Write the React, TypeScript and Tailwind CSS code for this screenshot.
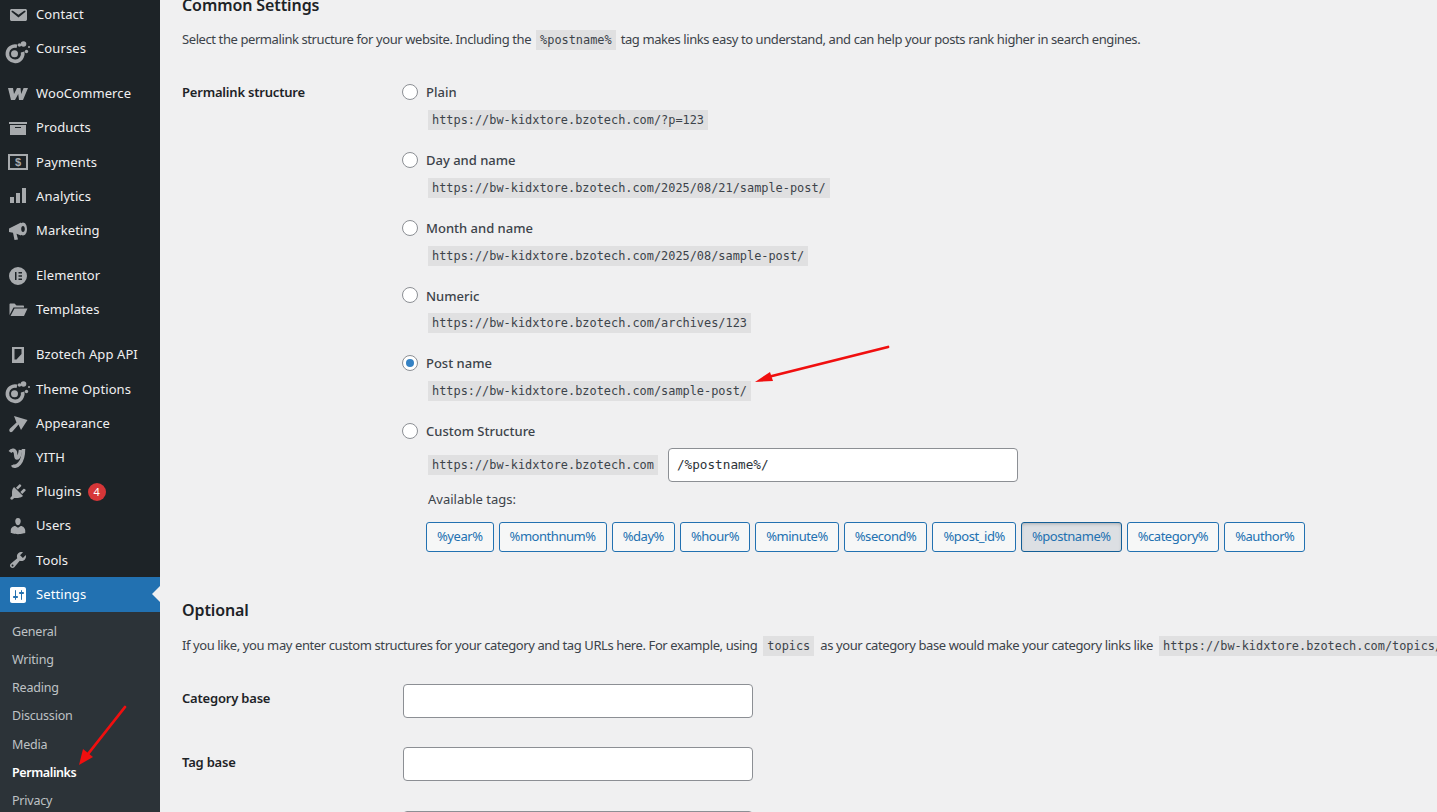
import type { ReactNode } from "react";

const Glyph = ({ children, size = 20 }: { children: ReactNode; size?: number }) => (
    <svg width={size} height={size} viewBox="0 0 20 20" fill="currentColor">
        {children}
    </svg>
);

const icons: Record<string, ReactNode> = {
    mail: (
        <Glyph>
            <path d="M3.87 4h13.25C18.37 4 19 4.59 19 5.79v8.42c0 1.19-.63 1.79-1.88 1.79H3.87c-1.25 0-1.88-.6-1.88-1.79V5.79c0-1.2.63-1.79 1.88-1.79zm6.62 8.6l6.74-5.53c.24-.2.43-.66.13-1.07-.29-.41-.82-.42-1.17-.17l-5.7 3.86L4.8 5.83c-.35-.25-.88-.24-1.17.17-.3.41-.11.87.13 1.07z" />
        </Glyph>
    ),
    ring: (
        <svg width="26" height="26" viewBox="0 0 26 26" fill="currentColor" className="overflow-visible">
            <path d="M12 10.2A7.7 7.7 0 1 0 17.6 16" fill="none" stroke="currentColor" strokeWidth="3.6" />
            <circle cx="9.5" cy="17.7" r="3.5" />
            <circle cx="18.5" cy="8" r="2.8" />
            <circle cx="14.5" cy="9" r="1.8" />
            <circle cx="21.5" cy="15.5" r="1.7" />
            <circle cx="24" cy="11" r="1" />
        </svg>
    ),
    woo: (
        <svg width="20" height="12" viewBox="0 0 20 12" fill="currentColor">
            <path d="M0 0h5l1 6 3-6h3.5l.7 6 2.4-6H20l-5 12h-4l-.8-6-3.2 6H3z" />
        </svg>
    ),
    archive: (
        <Glyph>
            <path d="M19 4v2H1V4h18zM2 7h16v10H2V7zm11 3V9H7v1h6z" />
        </Glyph>
    ),
    money: (
        <svg width="20" height="16" viewBox="0 0 20 16" fill="none">
            <rect x="1" y="1" width="18" height="14" stroke="currentColor" strokeWidth="2" />
            <text x="10" y="12.2" textAnchor="middle" fontSize="11" fontWeight="700" fontFamily="Liberation Sans, sans-serif" fill="currentColor">
                $
            </text>
        </svg>
    ),
    bars: (
        <Glyph>
            <path d="M2 11h4v6H2zM8 7h4v10H8zM14 2h4v15h-4z" />
        </Glyph>
    ),
    megaphone: (
        <Glyph>
            <path d="M1 7.5L13 1.5v13l-4.500-1.700L10 18.500l-3.500.5L5 11.800 1 11z" />
            <path fillRule="evenodd" d="M15 1.500c2.300 0 4 2.900 4 6.500s-1.700 6.500-4 6.500-4-2.900-4-6.500 1.700-6.500 4-6.500zm0 3.500c-1 0-1.800 1.300-1.800 3s.8 3 1.800 3 1.800-1.300 1.800-3-.8-3-1.800-3z" />
        </Glyph>
    ),
    elementor: (
        <svg width="18" height="18" viewBox="0 0 18 18" fill="currentColor">
            <path fillRule="evenodd" d="M9 0a9 9 0 1 1 0 18A9 9 0 0 1 9 0zM6 5v8h1.500V5zm3.500 0v1.500H13V5zm0 3.250v1.500H13v-1.500zm0 3.250V13H13v-1.500z" />
        </svg>
    ),
    folder: (
        <Glyph>
            <path d="M16 7.500H5.500L1.500 15V4.500c0-.6.400-1 1-1h4l2 2h6.500c.6 0 1 .4 1 1zM6.500 8.500H19.500L16 16H2.500z" />
        </Glyph>
    ),
    phone: (
        <svg width="12" height="16" viewBox="0 0 12 16" fill="currentColor">
            <path fillRule="evenodd" d="M0 0h12v16H0zM2.500 2v10.500h2L9.500 7V2z" />
        </svg>
    ),
    brush: (
        <Glyph>
            <path d="M6 2L19.500 6 13 16 10.500 10.500 4.500 17.500Q2.800 18.800 1.600 17.400 .6 16 2 14.500L8.500 8.500z" />
        </Glyph>
    ),
    yith: (
        <svg width="18" height="20" viewBox="0 0 18 20" fill="none" stroke="currentColor" strokeWidth="3.5" className="overflow-visible">
            <path d="M1 4c2-3 5-2 5.500 1s0 5 1.500 5 3-3 3.500-8" />
            <path d="M14.500 1c0 6-1 11-4 14.500s-6 3.500-7 1.500" />
        </svg>
    ),
    plugin: (
        <Glyph>
            <path d="M13.110 4.360L9.870 7.600 8 5.730l3.240-3.240c.35-.34 1.050-.2 1.560.32.52.51.66 1.210.31 1.550zm-8 1.770l.91-1.120 9.010 9.010-1.190.84c-.71.71-2.630 1.160-3.820 1.160H6.140L4.900 17.260c-.59.59-1.540.59-2.120 0-.59-.58-.59-1.530 0-2.120l1.240-1.240v-3.880c0-1.130.4-3.190 1.090-3.890zm7.260 3.970l3.240-3.240c.34-.35 1.040-.21 1.550.31.52.51.66 1.210.31 1.550l-3.240 3.250z" />
        </Glyph>
    ),
    users: (
        <Glyph>
            <path d="M10 9.250c-2.270 0-2.730-3.440-2.730-3.440C7 4.020 7.820 2 9.970 2c2.160 0 2.980 2.020 2.710 3.810 0 0-.41 3.440-2.680 3.440zm0 2.570L12.720 10c2.390 0 4.520 2.330 4.520 4.530v2.490s-3.650 1.130-7.240 1.130c-3.650 0-7.240-1.130-7.240-1.130v-2.490c0-2.250 1.940-4.480 4.470-4.480z" />
        </Glyph>
    ),
    wrench: (
        <Glyph>
            <path d="M16.680 9.770c-1.340 1.340-3.300 1.670-4.950.99l-5.410 6.520c-.99.99-2.590.99-3.580 0s-.99-2.590 0-3.570l6.520-5.420c-.68-1.650-.35-3.610.99-4.950 1.280-1.280 3.120-1.620 4.720-1.060l-2.890 2.890 2.820 2.820 2.860-2.870c.53 1.580.18 3.390-1.080 4.650zM3.810 16.210c.4.39 1.040.39 1.430 0 .4-.4.4-1.040 0-1.430-.39-.4-1.030-.4-1.430 0-.39.39-.39 1.030 0 1.430z" />
        </Glyph>
    ),
    settings: (
        <Glyph>
            <path d="M18 16V4c0-1.100-.9-2-2-2H4c-1.100 0-2 .9-2 2v12c0 1.100.9 2 2 2h12c1.100 0 2-.9 2-2zM8 11h1c.55 0 1 .45 1 1s-.45 1-1 1H8v1.500c0 .28-.22.5-.5.5s-.5-.22-.5-.5V13H6c-.55 0-1-.45-1-1s.45-1 1-1h1V5.500c0-.28.22-.5.5-.5s.5.22.5.5V11zm5-2h-1c-.55 0-1-.45-1-1s.45-1 1-1h1V5.500c0-.28.22-.5.5-.5s.5.22.5.5V7h1c.55 0 1 .45 1 1s-.45 1-1 1h-1v5.500c0 .28-.22.5-.5.5s-.5-.22-.5-.5V9z" />
        </Glyph>
    ),
};

const menuGroups = [
    [
        ["Contact", "mail"],
        ["Courses", "ring"],
    ],
    [
        ["WooCommerce", "woo"],
        ["Products", "archive"],
        ["Payments", "money"],
        ["Analytics", "bars"],
        ["Marketing", "megaphone"],
    ],
    [
        ["Elementor", "elementor"],
        ["Templates", "folder"],
    ],
    [
        ["Bzotech App API", "phone"],
        ["Theme Options", "ring"],
        ["Appearance", "brush"],
        ["YITH", "yith"],
        ["Plugins", "plugin"],
        ["Users", "users"],
        ["Tools", "wrench"],
    ],
];

const subMenu = ["General", "Writing", "Reading", "Discussion", "Media", "Permalinks", "Privacy"];

const structures = [
    ["Plain", "https://bw-kidxtore.bzotech.com/?p=123"],
    ["Day and name", "https://bw-kidxtore.bzotech.com/2025/08/21/sample-post/"],
    ["Month and name", "https://bw-kidxtore.bzotech.com/2025/08/sample-post/"],
    ["Numeric", "https://bw-kidxtore.bzotech.com/archives/123"],
    ["Post name", "https://bw-kidxtore.bzotech.com/sample-post/"],
];

const tags = ["%year%", "%monthnum%", "%day%", "%hour%", "%minute%", "%second%", "%post_id%", "%postname%", "%category%", "%author%"];

const Code = ({ children }: { children: ReactNode }) => (
    <code className="inline-block h-5 bg-[#e0e0e1] px-1 font-['DejaVu_Sans_Mono',monospace] text-[11.9px] leading-5 tracking-normal whitespace-nowrap text-[#3c434a]">
        {children}
    </code>
);

const Radio = ({ checked }: { checked?: boolean }) => (
    <span className="flex h-4 w-4 shrink-0 items-center justify-center rounded-full border border-[#8c8f94] bg-white">
        {checked && <span className="h-2 w-2 rounded-full bg-[#3582c4]" />}
    </span>
);

const Sidebar = () => (
    <aside className="relative h-full w-40 shrink-0 overflow-hidden bg-[#1d2327] text-[13px] tracking-[0.1px] text-[#f0f0f1]">
        <div className="-mt-[2.6px]">
            {menuGroups.map((group, i) => (
                <div key={i} className="mb-[11px]">
                    {group.map(([label, icon]) => (
                        <div key={label} className="flex h-[34.2px] items-center">
                            <span className="flex w-9 shrink-0 items-center justify-center text-[#a7aaad]">{icons[icon]}</span>
                            <span>{label}</span>
                            {label === "Plugins" && (
                                <span className="ml-[6px] flex h-[18px] w-[18px] items-center justify-center rounded-full bg-[#d63638] text-[11px] text-white">
                                    4
                                </span>
                            )}
                        </div>
                    ))}
                </div>
            ))}
        </div>
        <div className="relative -mt-[11px] flex h-[34.2px] items-center bg-[#2271b1] text-white">
            <span className="flex w-9 shrink-0 items-center justify-center">{icons.settings}</span>
            <span>Settings</span>
            <span className="absolute top-[9px] right-0 h-0 w-0 border-y-8 border-r-8 border-y-transparent border-r-[#f0f0f1]" />
        </div>
        <div className="bg-[#2c3338] pt-[6.6px] pb-4">
            {subMenu.map((item) => (
                <div
                    key={item}
                    className={`flex h-[28.17px] items-center pl-3 text-[12.5px] tracking-[-0.2px] ${item === "Permalinks" ? "font-semibold tracking-[-0.4px] text-white" : "text-[#bfc2c5]"}`}
                >
                    {item}
                </div>
            ))}
        </div>
    </aside>
);

export default function App() {
    return (
        <div className="relative flex h-[812px] w-[1437px] overflow-hidden bg-[#f0f0f1] font-['Noto_Sans',sans-serif] text-[13px] text-[#3c434a]">
            <Sidebar />
            <main className="min-w-0 flex-1 pl-[22px]">
                <h2 className="-mt-[6px] h-[22px] text-[16px] leading-[22px] font-semibold tracking-[-0.1px] text-[#1d2327]">Common Settings</h2>
                <p className="mt-[14px] flex h-5 items-center tracking-[-0.41px] whitespace-nowrap">
                    Select the permalink structure for your website. Including the
                    <span className="mx-[5px]">
                        <Code>%postname%</Code>
                    </span>
                    tag makes links easy to understand, and can help your posts rank higher in search engines.
                </p>

                <div className="mt-[32px] flex">
                    <div className="w-[220px] shrink-0 pt-px font-semibold tracking-[-0.2px] text-[#1d2327]">Permalink structure</div>
                    <div>
                        {structures.map(([label, url]) => (
                            <div key={label} className="h-[67.8px]">
                                <div className="flex h-5 items-center gap-2 font-medium">
                                    <Radio checked={label === "Post name"} />
                                    <span className="pt-[2px]">{label}</span>
                                </div>
                                <div className="mt-2 pl-[26px]">
                                    <Code>{url}</Code>
                                </div>
                            </div>
                        ))}
                        <div className="flex h-5 items-center gap-2 font-medium">
                            <Radio />
                            <span className="pt-[2px]">Custom Structure</span>
                        </div>
                        <div className="mt-[7px] flex h-[34px] items-center pl-[26px]">
                            <Code>https://bw-kidxtore.bzotech.com</Code>
                            <span className="ml-[10px] flex h-[34px] w-[350px] items-center rounded border border-[#8c8f94] bg-white px-2 font-['DejaVu_Sans_Mono',monospace] text-[12.7px] text-[#2c3338]">
                                /%postname%/
                            </span>
                        </div>
                        <div className="mt-[7px] h-5 pl-[26px] leading-5">Available tags:</div>
                        <div className="mt-[13px] flex gap-[5px] pl-6">
                            {tags.map((tag) => (
                                <span
                                    key={tag}
                                    className={`flex h-[30px] items-center rounded-[3px] border px-[10px] tracking-[-0.45px] whitespace-nowrap text-[#2271b1] ${
                                        tag === "%postname%"
                                            ? "border-[#135e96] bg-[#dcdfe3] shadow-[inset_0_2px_5px_-3px_rgba(0,0,0,0.5)]"
                                            : "border-[#2271b1] bg-[#f6f7f7]"
                                    }`}
                                >
                                    {tag}
                                </span>
                            ))}
                        </div>
                    </div>
                </div>

                <h2 className="mt-[47px] h-[22px] text-[16px] leading-[22px] font-semibold tracking-[-0.1px] text-[#1d2327]">Optional</h2>
                <p className="mt-[15px] flex h-5 items-center tracking-[-0.4px] whitespace-nowrap">
                    If you like, you may enter custom structures for your category and tag URLs here. For example, using
                    <span className="mx-[6px]">
                        <Code>topics</Code>
                    </span>
                    as your category base would make your category links like
                    <span className="ml-[6px]">
                        <Code>https://bw-kidxtore.bzotech.com/topics/uncategorized/</Code>
                    </span>
                </p>

                <div className="mt-[28px] flex flex-col gap-[29.5px]">
                    {["Category base", "Tag base", ""].map((label) => (
                        <div key={label} className="flex h-[34px] items-center">
                            <div className="w-[221px] shrink-0 pb-1 font-semibold tracking-[-0.2px] text-[#1d2327]">{label}</div>
                            <span className="h-[34px] w-[350px] rounded border border-[#8c8f94] bg-white" />
                        </div>
                    ))}
                </div>
            </main>

            {/* red annotation arrows drawn over the capture */}
            <svg className="pointer-events-none absolute inset-0" width="1437" height="812" fill="#f00f0f">
                <path d="M888 347L768 377" stroke="#f00f0f" strokeWidth="2.8" strokeLinecap="round" />
                <path d="M755 382L770 372L773 381z" />
                <path d="M125 707L88 754" stroke="#f00f0f" strokeWidth="2.8" strokeLinecap="round" />
                <path d="M79 765L83 749L93 757z" />
            </svg>
        </div>
    );
}
